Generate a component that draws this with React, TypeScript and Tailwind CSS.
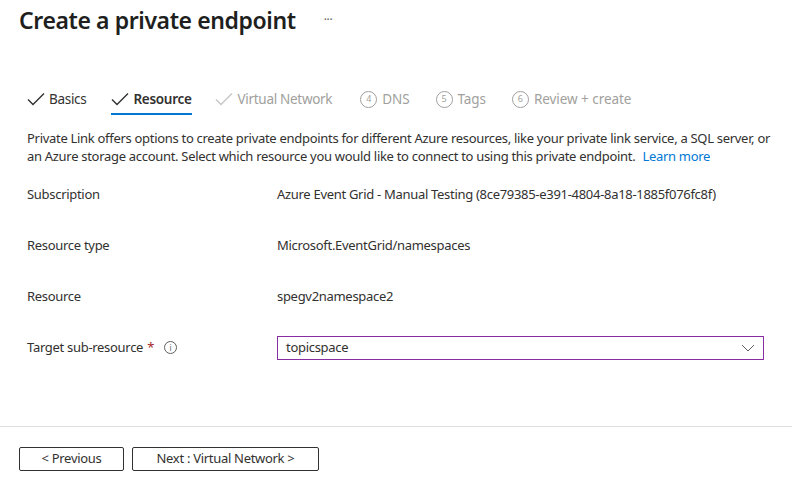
import React from "react";

const font = { fontFamily: '"Noto Sans", "Open Sans", sans-serif' };

const Check = ({ color }: { color: string }) => (
  <svg width="18" height="14" viewBox="0 0 18 14" fill="none">
    <path d="M1 7.5 L6 12.5 L17 1.5" stroke={color} strokeWidth="1.4" />
  </svg>
);

const Num = ({ n }: { n: number }) => (
  <span className="flex h-[17px] w-[17px] items-center justify-center rounded-full border border-[#a19f9d] text-[9px] tracking-normal text-[#a19f9d]">
    {n}
  </span>
);

const Row = ({ label, value }: { label: string; value: string }) => (
  <div className="flex h-[51px] items-center">
    <div className="w-[250px]">{label}</div>
    <div>{value}</div>
  </div>
);

export default function App() {
  return (
    <div
      className="h-[488px] w-[792px] overflow-hidden bg-white text-[13px] tracking-[-0.3px] text-[#323130]"
      style={font}
    >
      <div className="flex items-center px-[19px] pt-[3px]">
        <h1 className="text-[23px] font-semibold leading-[34px] tracking-[-0.4px] text-[#201f1e]">
          Create a private endpoint
        </h1>
        <span className="ml-[28px] text-[12px] text-[#605e5c]">···</span>
      </div>

      <div className="mt-[46px] flex h-[32px] items-center px-[27px] text-[13.5px]">
        <div className="flex items-center gap-[4px]">
          <Check color="#323130" />
          <span>Basics</span>
        </div>
        <div className="relative ml-[25px] flex items-center gap-[4px] font-semibold">
          <Check color="#323130" />
          <span>Resource</span>
          <div className="absolute -bottom-[6px] left-0 right-0 h-[2px] bg-[#0078d4]" />
        </div>
        <div className="ml-[23px] flex items-center gap-[5px] text-[#a19f9d]">
          <Check color="#c8c6c4" />
          <span>Virtual Network</span>
        </div>
        <div className="ml-[28px] flex items-center gap-[5px] text-[#a19f9d]">
          <Num n={4} />
          <span className="tracking-[-0.1px]">DNS</span>
        </div>
        <div className="ml-[26px] flex items-center gap-[5px] text-[#a19f9d]">
          <Num n={5} />
          <span className="tracking-[-0.1px]">Tags</span>
        </div>
        <div className="ml-[26px] flex items-center gap-[5px] text-[#a19f9d]">
          <Num n={6} />
          <span className="tracking-[-0.05px]">Review + create</span>
        </div>
      </div>

      <div className="px-[27px]">
        <p className="mt-[14px] whitespace-nowrap leading-[18px]">
          Private Link offers options to create private endpoints for different Azure resources, like your private link service, a SQL server, or
          <br />
          an Azure storage account. Select which resource you would like to connect to using this private endpoint.{" "}
          <span className="ml-[4px] text-[#0078d4]">Learn more</span>
        </p>

        <div className="mt-[4px]">
          <Row label="Subscription" value="Azure Event Grid - Manual Testing (8ce79385-e391-4804-8a18-1885f076fc8f)" />
          <Row label="Resource type" value="Microsoft.EventGrid/namespaces" />
          <Row label="Resource" value="spegv2namespace2" />
          <div className="flex h-[51px] items-center">
            <div className="flex w-[250px] items-center">
              <span>Target sub-resource</span>
              <span className="ml-[4px] text-[#a4262c]">*</span>
              <span className="ml-[10px] flex h-[13px] w-[13px] items-center justify-center rounded-full border border-[#605e5c] text-[8px] leading-none tracking-normal text-[#605e5c]">
                i
              </span>
            </div>
            <div className="flex h-[24px] w-[487px] items-center justify-between border border-[#8a2da5] px-[8px]">
              <span>topicspace</span>
              <svg width="14" height="8" viewBox="0 0 14 8" fill="none">
                <path d="M1 1 L7 7 L13 1" stroke="#605e5c" strokeWidth="1" />
              </svg>
            </div>
          </div>
        </div>
      </div>

      <div className="mt-[53px] border-t border-[#e1dfdd]" />

      <div className="flex gap-[8px] px-[19px] pt-[20px]">
        <button className="h-[24px] w-[105px] rounded-[2px] border border-[#323130] text-[13px]">&lt; Previous</button>
        <button className="h-[24px] w-[187px] rounded-[2px] border border-[#323130] text-[13px]">
          Next : Virtual Network &gt;
        </button>
      </div>
    </div>
  );
}
